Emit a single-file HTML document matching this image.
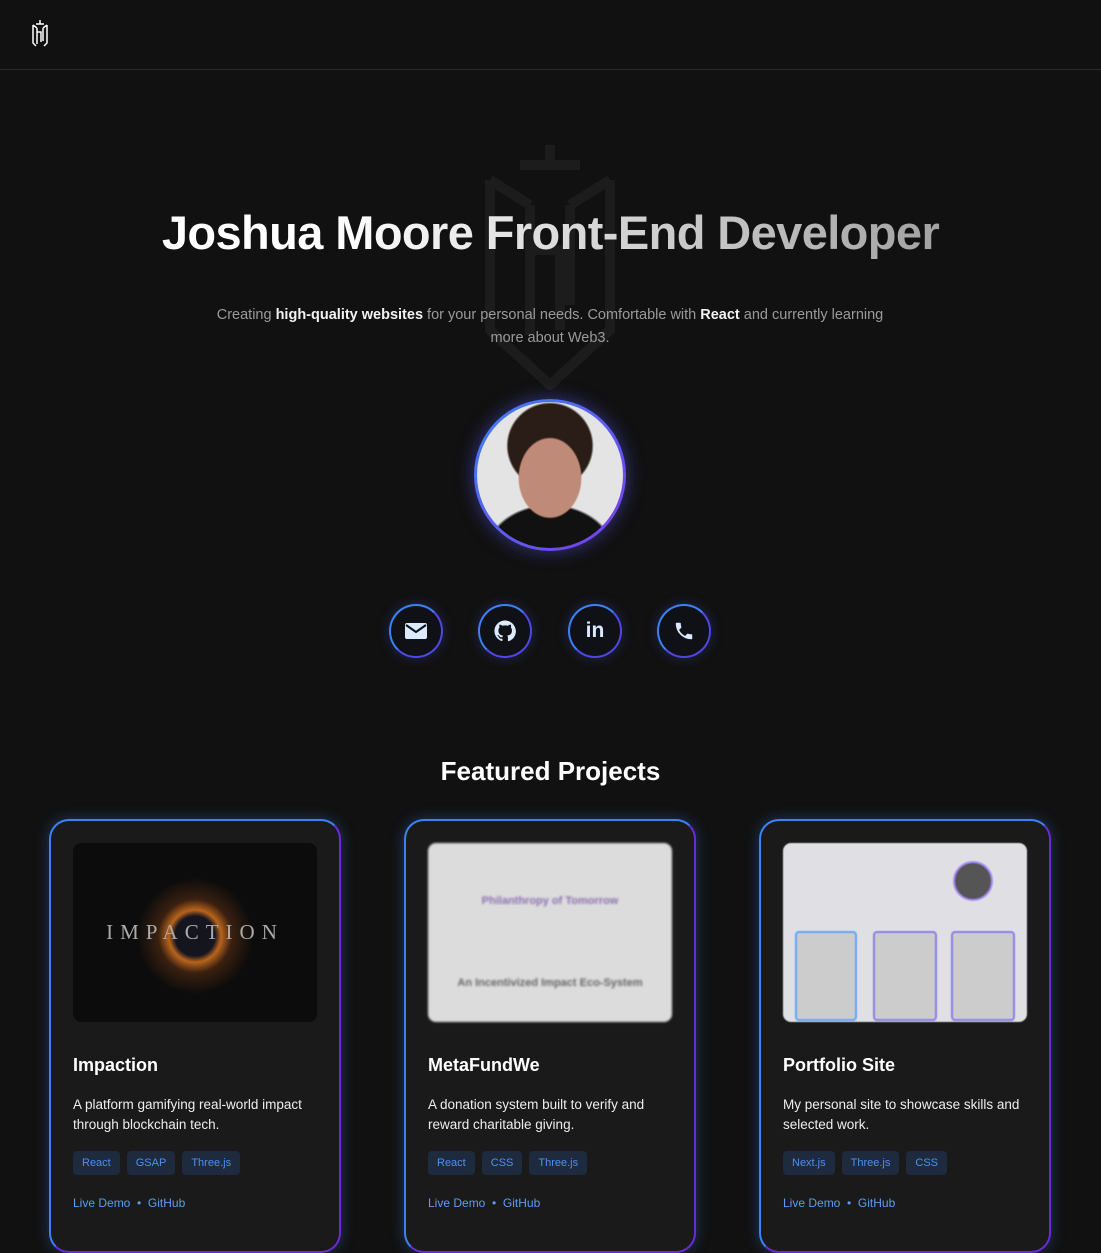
<!DOCTYPE html><html><head><style>
body{margin:0;width:1101px;height:1235px;background:#111111;font-family:"Liberation Sans",sans-serif;overflow:hidden;position:relative}
.nav{height:69px;border-bottom:1px solid #2a2a2a;position:relative}
.abs{position:absolute}
h1{position:absolute;left:0;width:1101px;top:205px;margin:0;text-align:center;font-size:47px;font-weight:bold;letter-spacing:-0.6px;background:linear-gradient(90deg,#fff 30%,#8a8a8a 100%);-webkit-background-clip:text;color:transparent}
.sub{position:absolute;left:200px;width:700px;top:304px;text-align:center;color:#9a9a9a;font-size:14.5px;line-height:23px}
.sub b{color:#f2f2f2}
.av{position:absolute;left:474px;top:399px;width:152px;height:152px;border-radius:50%;background:linear-gradient(135deg,#3b82f6,#7c3aed);box-shadow:0 0 18px rgba(90,90,255,.5)}
.av div{position:absolute;inset:3px;border-radius:50%;background:radial-gradient(ellipse 22% 28% at 50% 52%,#c08a78 0 95%,transparent 100%),radial-gradient(ellipse 30% 30% at 50% 30%,#2a1d17 0 95%,transparent 100%),radial-gradient(ellipse 45% 35% at 50% 105%,#111 0 95%,transparent 100%),#e4e4e4;overflow:hidden}
.ic{position:absolute;top:604px;width:50px;height:50px;border-radius:50%;border:2px solid #4f46e5;border-top-color:#3b82f6;border-left-color:#3b82f6;background:#0f1117;box-shadow:0 0 12px rgba(60,80,200,.35);display:flex;align-items:center;justify-content:center}
h2{position:absolute;left:0;width:1101px;top:756px;margin:0;text-align:center;color:#fff;font-size:26px}
.card{position:absolute;top:819px;width:288px;height:430px;border-radius:20px;border:2px solid #3b82f6;border-bottom-color:#6d28d9;border-right-color:#6d28d9;background:#1a1a1b;box-shadow:0 0 14px rgba(59,130,246,.35)}
.img{position:absolute;left:22px;top:22px;width:244px;height:179px;border-radius:8px;overflow:hidden}
.t{position:absolute;left:22px;top:234px;color:#fff;font-weight:bold;font-size:18px}
.d{position:absolute;left:22px;top:274px;width:260px;color:#eee;font-size:13.5px;line-height:20px}
.tags{position:absolute;left:22px;top:330px;display:flex;gap:7px}
.tags span{background:#1e2a3e;color:#4f8ff0;font-size:11px;padding:6px 9px;border-radius:4px}
.l{position:absolute;left:22px;top:375px;color:#5b9cf5;font-size:12px}
</style></head><body>
<div class="nav"><svg class="abs" style="left:30px;top:18px" width="20" height="30" viewBox="0 0 20 30" fill="none" stroke="#fff" stroke-width="1.5"><path d="M6 6h8M10 2v4M3 7v18l3 3M17 7v18l-3 3M3 7l4 3M17 7l-4 3M7 10v16M13 10v13M7 14h4v10"/></svg></div>
<svg class="abs" style="left:465px;top:140px;opacity:.07" width="170" height="250" viewBox="0 0 170 250" fill="none" stroke="#aaa" stroke-width="10"><path d="M55 25h60M85 5v20M25 40v150l60 55l60-55V40M25 40l40 25M145 40l-40 25M65 65v130M105 65v100M65 110h30v80"/></svg>
<h1>Joshua Moore Front-End Developer</h1>
<div class="sub">Creating <b>high-quality websites</b> for your personal needs. Comfortable with <b>React</b> and currently learning more about Web3.</div>
<div class="av"><div></div></div>
<div class="ic" style="left:389px"><svg width="22" height="16" viewBox="0 0 22 16"><rect width="22" height="16" rx="2" fill="#dbeafe"/><path d="M1 2l10 7 10-7" stroke="#0f1117" stroke-width="2" fill="none"/></svg></div>
<div class="ic" style="left:478px"><svg width="22" height="22" viewBox="0 0 24 24" fill="#dbeafe"><path d="M12 .5C5.6.5.5 5.6.5 12c0 5.1 3.3 9.4 7.9 10.9.6.1.8-.2.8-.6v-2c-3.2.7-3.9-1.5-3.9-1.5-.5-1.3-1.3-1.700-1.3-1.7-1-.7.1-.7.1-.7 1.2.1 1.800 1.2 1.8 1.2 1 1.8 2.7 1.3 3.4 1 .1-.8.4-1.3.7-1.600-2.6-.3-5.200-1.3-5.200-5.700 0-1.300.5-2.300 1.200-3.100-.1-.3-.5-1.500.1-3.100 0 0 1-.3 3.200 1.200a11 11 0 0 1 5.800 0c2.200-1.500 3.200-1.200 3.200-1.200.6 1.600.2 2.800.1 3.100.7.8 1.200 1.800 1.200 3.100 0 4.400-2.700 5.400-5.200 5.700.4.4.8 1.100.8 2.200v3.300c0 .3.2.7.8.6 4.600-1.500 7.900-5.800 7.900-10.900C23.5 5.6 18.4.5 12 .5z"/></svg></div>
<div class="ic" style="left:568px;color:#dbeafe;font-weight:bold;font-size:21px">in</div>
<div class="ic" style="left:657px"><svg width="22" height="22" viewBox="0 0 24 24" fill="#dbeafe"><path d="M6.6 10.8a15.1 15.1 0 0 0 6.6 6.6l2.2-2.2c.3-.3.7-.4 1-.2 1.1.4 2.3.6 3.6.6.6 0 1 .4 1 1V20c0 .6-.4 1-1 1A17 17 0 0 1 3 4c0-.6.4-1 1-1h3.5c.6 0 1 .4 1 1 0 1.3.2 2.5.6 3.6.1.3 0 .7-.2 1z"/></svg></div>
<h2>Featured Projects</h2>
<div class="card" style="left:49px"><div class="img" style="background:radial-gradient(circle at 50% 52%,#151520 0 13%,#b8641c 17%,#3a2010 24%,#0c0c0c 38%);color:#aaa;font-family:'Liberation Serif';font-size:21px;letter-spacing:7px;display:flex;align-items:center;justify-content:center">IMPACTION</div><div class="t">Impaction</div><div class="d">A platform gamifying real-world impact through blockchain tech.</div><div class="tags"><span>React</span><span>GSAP</span><span>Three.js</span></div><div class="l">Live Demo &nbsp;•&nbsp; GitHub</div></div>
<div class="card" style="left:404px"><div class="img" style="background:#dcdcdc;filter:blur(1px)"><div style="margin:52px 0 0;text-align:center;color:#8a6fb0;font-size:11px;font-weight:bold">Philanthropy of Tomorrow</div><div style="margin-top:70px;text-align:center;color:#666;font-size:11px;font-weight:bold">An Incentivized Impact Eco-System</div></div><div class="t">MetaFundWe</div><div class="d">A donation system built to verify and reward charitable giving.</div><div class="tags"><span>React</span><span>CSS</span><span>Three.js</span></div><div class="l">Live Demo &nbsp;•&nbsp; GitHub</div></div>
<div class="card" style="left:759px"><div class="img" style="background:#e0e0e4;filter:blur(.6px)"><div style="position:absolute;left:12px;top:88px;width:58px;height:86px;border:2px solid #60a5fa;border-radius:4px;background:#ccc"></div><div style="position:absolute;left:90px;top:88px;width:60px;height:86px;border:2px solid #8b7ee8;border-radius:4px;background:#ccc"></div><div style="position:absolute;left:168px;top:88px;width:60px;height:86px;border:2px solid #8b7ee8;border-radius:4px;background:#ccc"></div><div style="position:absolute;left:170px;top:18px;width:36px;height:36px;border-radius:50%;background:#555;border:2px solid #a78bfa"></div></div><div class="t">Portfolio Site</div><div class="d">My personal site to showcase skills and selected work.</div><div class="tags"><span>Next.js</span><span>Three.js</span><span>CSS</span></div><div class="l">Live Demo &nbsp;•&nbsp; GitHub</div></div>
</body></html>
